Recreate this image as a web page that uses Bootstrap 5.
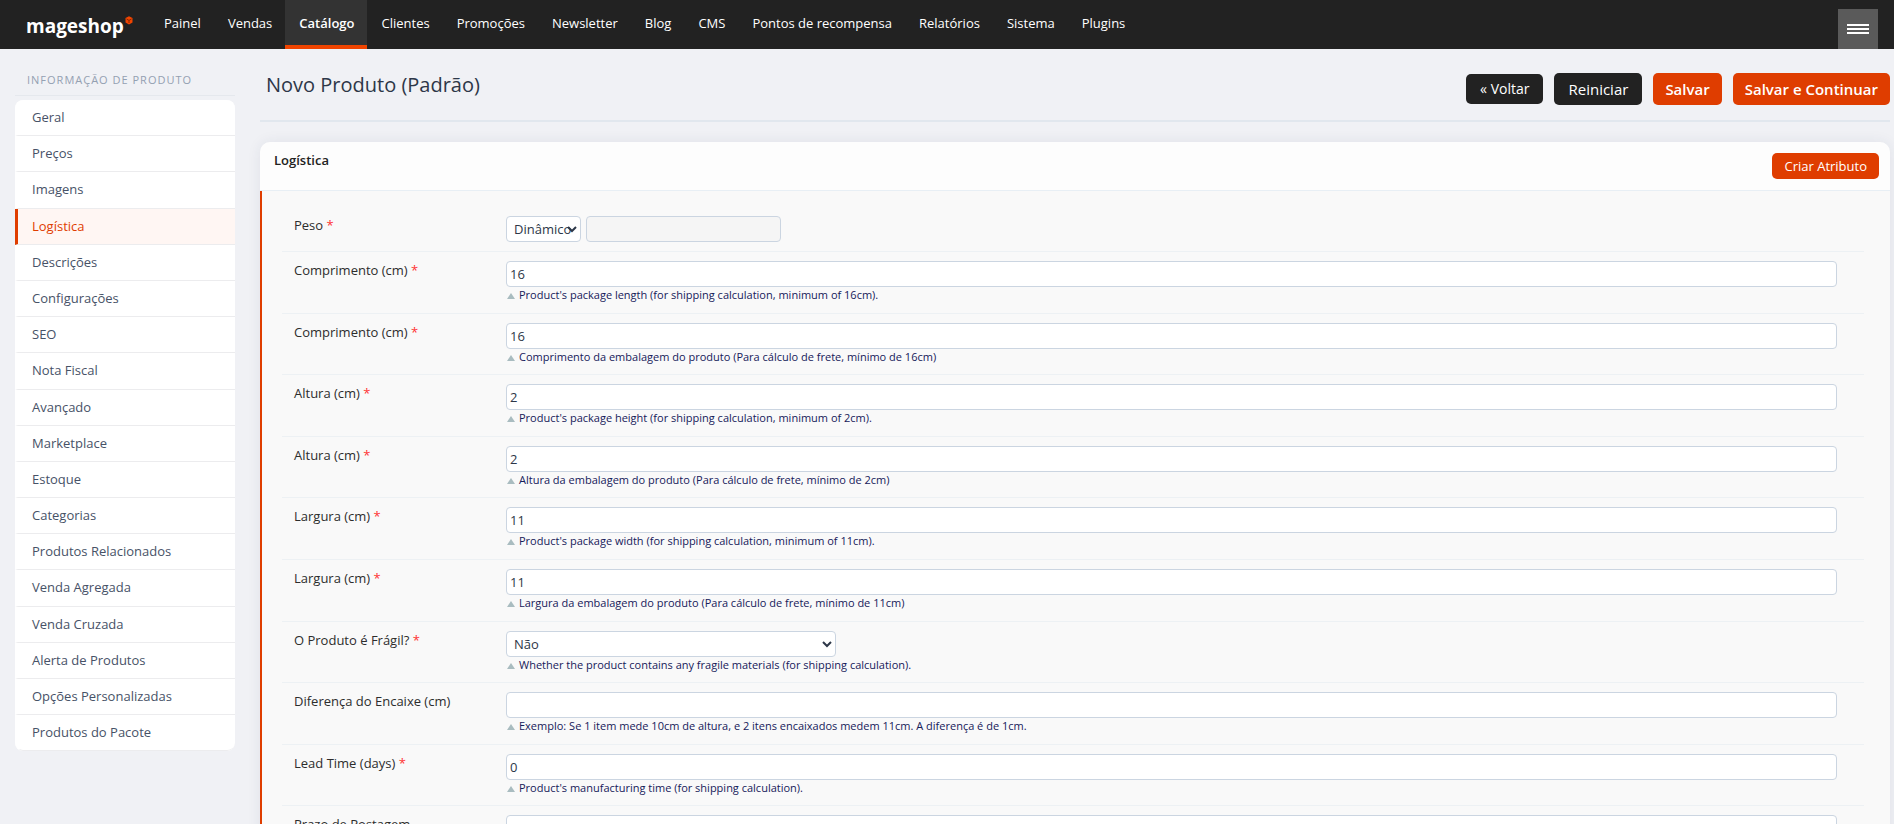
<!DOCTYPE html>
<html lang="pt-BR">
<head>
<meta charset="utf-8">
<meta name="viewport" content="width=device-width, initial-scale=1">
<title>Novo Produto (Padrão)</title>
<link href="https://cdn.jsdelivr.net/npm/bootstrap@5.3.0/dist/css/bootstrap.min.css" rel="stylesheet">
<style>
:root{--accent:#df3d00;--ink:#222}
body{font-family:"Open Sans","Noto Sans",sans-serif;font-size:13px;line-height:18px;background:#f0f1f5;color:#2d2d2d}
.topbar{background:var(--ink);min-height:49px}
.brand{margin-left:26px;width:124px;padding-top:11px;font-size:19px;line-height:30px;font-weight:700;color:#fff;text-decoration:none}
.brand svg{margin:5px 0 0 1px}
.topnav .nav-link{color:#fff;padding:14px 13px 13px 14px;height:49px;border-bottom:4px solid transparent}
.topnav .nav-link.active{background:#333;border-color:#f04400;font-weight:600}
.menu-btn{width:40px;height:40px;background:#5a5a5a;margin-right:16px;gap:2px}
.menu-btn span{width:22px;height:2px;background:#fff}
.shell{padding:0 4px 0 15px;gap:25px}
.side{width:220px}
.side-title{font-size:11px;font-weight:400;letter-spacing:1px;color:#94a0b2;padding:22px 12px 6px;line-height:18px;border-bottom:1px solid #e5e8ed;margin-bottom:4px}
.side .list-group{--bs-list-group-border-radius:8px;--bs-list-group-border-color:#ececee;overflow:hidden;background:#fff}
.side .list-group .list-group-item{padding:8px 14px 9px;border-width:0 0 1px 3px;border-left-color:transparent;color:#475267;line-height:1.4;margin-top:0}
.side .list-group .list-group-item.active{color:var(--accent);background:#fff6f3;border-color:#ececee;border-left-color:var(--accent)}
.page-head{padding:24px 0 15px 6px;border-bottom:2px solid #e1e7ee;margin-bottom:20px}
.page-head h1{font-size:20px;line-height:24px;font-weight:500;color:#2d3748}
.btn{--bs-btn-font-size:13px;--bs-btn-border-radius:5px;--bs-btn-border-width:0;--bs-btn-line-height:18px;--bs-btn-padding-x:12px;--bs-btn-padding-y:4px}
.btn-accent{--bs-btn-bg:var(--accent);--bs-btn-color:#fff;--bs-btn-hover-bg:#c53600;--bs-btn-hover-color:#fff}
.btn-ink{--bs-btn-bg:var(--ink);--bs-btn-color:#fff;--bs-btn-hover-bg:#000;--bs-btn-hover-color:#fff}
.actions{gap:11px}
.actions .btn{font-size:15px;padding:7px 12px}
.actions .btn-accent{font-weight:600}
.actions .btn-ink{padding:7px 14px}
.actions .btn.back{font-size:14px;padding:6px 14px}
.panel{border-radius:10px 10px 0 0;box-shadow:0 0 14px rgba(40,50,90,.08)}
.panel-head{background:#fdfdfd;border-bottom:1px solid #e8eff5;border-radius:10px 10px 0 0;padding:11px 11px 11px 14px}
.panel-head h2{font-size:13px;line-height:14px;font-weight:600;color:#222}
.panel-body{background:#f9f9f9;border-left:2px solid var(--accent);padding:16px 26px 30px 20px}
.field-row{border-bottom:1px solid #edf1f4;padding:9px 27px 9px 12px}
.field-row .lbl{width:212px}
.pair{gap:5px}
.req{color:#f33}
.ctl{height:26px;font-size:13px;line-height:18px;color:#2d3748;border:1px solid #cbd5e1;border-radius:4px;padding:3px 3px}
.ctl.form-select{padding:3px 0 3px 7px;background-size:10px 8px;background-position:right 3px center;background-image:url("data:image/svg+xml,%3Csvg xmlns='http://www.w3.org/2000/svg' viewBox='0 0 10 8'%3E%3Cpath d='M1 2l4 4 4-4' fill='none' stroke='%232d3748' stroke-width='2'/%3E%3C/svg%3E")}
.ctl:disabled{background-color:#f5f5f5}
.w-mode{width:75px}.w-val{width:195px}.w-half{width:330px}
.hint{font-size:11px;line-height:1.6;color:#16205a;margin:-1px 0 0;padding-left:1px}
.hint::before{content:"";display:inline-block;border:4px solid transparent;border-top:0;border-bottom:6px solid #a9bcc0;margin-right:4px}
</style>
</head>
<body>
<header class="topbar d-flex align-items-start">
  <a class="brand d-flex align-items-start flex-shrink-0" href="#">mageshop<svg width="8" height="9" viewBox="0 0 8 9" aria-hidden="true"><path d="M4 .3l3.500 1.800v4.500L4 8.500.5 6.600V2.100z" fill="#f04400"/><path d="M1.500 3L4 4.400 6.500 3M4 4.400V7" stroke="#8a2800" fill="none"/></svg></a>
  <nav class="topnav nav flex-nowrap">
    <a class="nav-link" href="#">Painel</a><a class="nav-link" href="#">Vendas</a><a class="nav-link active" href="#">Catálogo</a><a class="nav-link" href="#">Clientes</a><a class="nav-link" href="#">Promoções</a><a class="nav-link" href="#">Newsletter</a><a class="nav-link" href="#">Blog</a><a class="nav-link" href="#">CMS</a><a class="nav-link" href="#">Pontos de recompensa</a><a class="nav-link" href="#">Relatórios</a><a class="nav-link" href="#">Sistema</a><a class="nav-link" href="#">Plugins</a>
  </nav>
  <button class="menu-btn border-0 p-0 ms-auto align-self-end d-flex flex-column align-items-center justify-content-center" type="button" aria-label="Menu"><span></span><span></span><span></span></button>
</header>
<div class="shell d-flex align-items-start">
  <aside class="side flex-shrink-0">
    <h3 class="side-title text-uppercase">Informação de Produto</h3>
    <div class="list-group">
      <a class="list-group-item" href="#">Geral</a>
      <a class="list-group-item" href="#">Preços</a>
      <a class="list-group-item" href="#">Imagens</a>
      <a class="list-group-item active" href="#">Logística</a>
      <a class="list-group-item" href="#">Descrições</a>
      <a class="list-group-item" href="#">Configurações</a>
      <a class="list-group-item" href="#">SEO</a>
      <a class="list-group-item" href="#">Nota Fiscal</a>
      <a class="list-group-item" href="#">Avançado</a>
      <a class="list-group-item" href="#">Marketplace</a>
      <a class="list-group-item" href="#">Estoque</a>
      <a class="list-group-item" href="#">Categorias</a>
      <a class="list-group-item" href="#">Produtos Relacionados</a>
      <a class="list-group-item" href="#">Venda Agregada</a>
      <a class="list-group-item" href="#">Venda Cruzada</a>
      <a class="list-group-item" href="#">Alerta de Produtos</a>
      <a class="list-group-item" href="#">Opções Personalizadas</a>
      <a class="list-group-item" href="#">Produtos do Pacote</a>
    </div>
  </aside>
  <main class="flex-grow-1">
    <div class="page-head d-flex justify-content-between align-items-start">
      <h1 class="m-0">Novo Produto (Padrão)</h1>
      <div class="actions d-flex align-items-center">
        <button class="btn btn-ink back" type="button">« Voltar</button>
        <button class="btn btn-ink" type="button">Reiniciar</button>
        <button class="btn btn-accent" type="button">Salvar</button>
        <button class="btn btn-accent" type="button">Salvar e Continuar</button>
      </div>
    </div>
    <section class="panel">
      <div class="panel-head d-flex justify-content-between align-items-start">
        <h2 class="m-0">Logística</h2>
        <button class="btn btn-accent" type="button">Criar Atributo</button>
      </div>
      <form class="panel-body">
        <div class="field-row d-flex">
          <label class="lbl flex-shrink-0" for="peso">Peso <span class="req">*</span></label>
          <div class="pair d-flex"><select id="peso" class="form-select ctl w-mode"><option>Dinâmico</option></select><input class="form-control ctl w-val" type="text" aria-label="Valor do peso" disabled></div>
        </div>
        <div class="field-row d-flex">
          <label class="lbl flex-shrink-0" for="f1">Comprimento (cm) <span class="req">*</span></label>
          <div class="flex-grow-1"><input id="f1" class="form-control ctl" type="text" value="16"><p class="hint">Product's package length (for shipping calculation, minimum of 16cm).</p></div>
        </div>
        <div class="field-row d-flex">
          <label class="lbl flex-shrink-0" for="f2">Comprimento (cm) <span class="req">*</span></label>
          <div class="flex-grow-1"><input id="f2" class="form-control ctl" type="text" value="16"><p class="hint">Comprimento da embalagem do produto (Para cálculo de frete, mínimo de 16cm)</p></div>
        </div>
        <div class="field-row d-flex">
          <label class="lbl flex-shrink-0" for="f3">Altura (cm) <span class="req">*</span></label>
          <div class="flex-grow-1"><input id="f3" class="form-control ctl" type="text" value="2"><p class="hint">Product's package height (for shipping calculation, minimum of 2cm).</p></div>
        </div>
        <div class="field-row d-flex">
          <label class="lbl flex-shrink-0" for="f4">Altura (cm) <span class="req">*</span></label>
          <div class="flex-grow-1"><input id="f4" class="form-control ctl" type="text" value="2"><p class="hint">Altura da embalagem do produto (Para cálculo de frete, mínimo de 2cm)</p></div>
        </div>
        <div class="field-row d-flex">
          <label class="lbl flex-shrink-0" for="f5">Largura (cm) <span class="req">*</span></label>
          <div class="flex-grow-1"><input id="f5" class="form-control ctl" type="text" value="11"><p class="hint">Product's package width (for shipping calculation, minimum of 11cm).</p></div>
        </div>
        <div class="field-row d-flex">
          <label class="lbl flex-shrink-0" for="f6">Largura (cm) <span class="req">*</span></label>
          <div class="flex-grow-1"><input id="f6" class="form-control ctl" type="text" value="11"><p class="hint">Largura da embalagem do produto (Para cálculo de frete, mínimo de 11cm)</p></div>
        </div>
        <div class="field-row d-flex">
          <label class="lbl flex-shrink-0" for="f7">O Produto é Frágil? <span class="req">*</span></label>
          <div class="flex-grow-1"><select id="f7" class="form-select ctl w-half"><option>Não</option><option>Sim</option></select><p class="hint">Whether the product contains any fragile materials (for shipping calculation).</p></div>
        </div>
        <div class="field-row d-flex">
          <label class="lbl flex-shrink-0" for="f8">Diferença do Encaixe (cm)</label>
          <div class="flex-grow-1"><input id="f8" class="form-control ctl" type="text"><p class="hint">Exemplo: Se 1 item mede 10cm de altura, e 2 itens encaixados medem 11cm. A diferença é de 1cm.</p></div>
        </div>
        <div class="field-row d-flex">
          <label class="lbl flex-shrink-0" for="f9">Lead Time (days) <span class="req">*</span></label>
          <div class="flex-grow-1"><input id="f9" class="form-control ctl" type="text" value="0"><p class="hint">Product's manufacturing time (for shipping calculation).</p></div>
        </div>
        <div class="field-row d-flex">
          <label class="lbl flex-shrink-0" for="f10">Prazo de Postagem</label>
          <div class="flex-grow-1"><input id="f10" class="form-control ctl" type="text"></div>
        </div>
      </form>
    </section>
  </main>
</div>
<script src="https://cdn.jsdelivr.net/npm/bootstrap@5.3.0/dist/js/bootstrap.bundle.min.js"></script>
</body>
</html>
